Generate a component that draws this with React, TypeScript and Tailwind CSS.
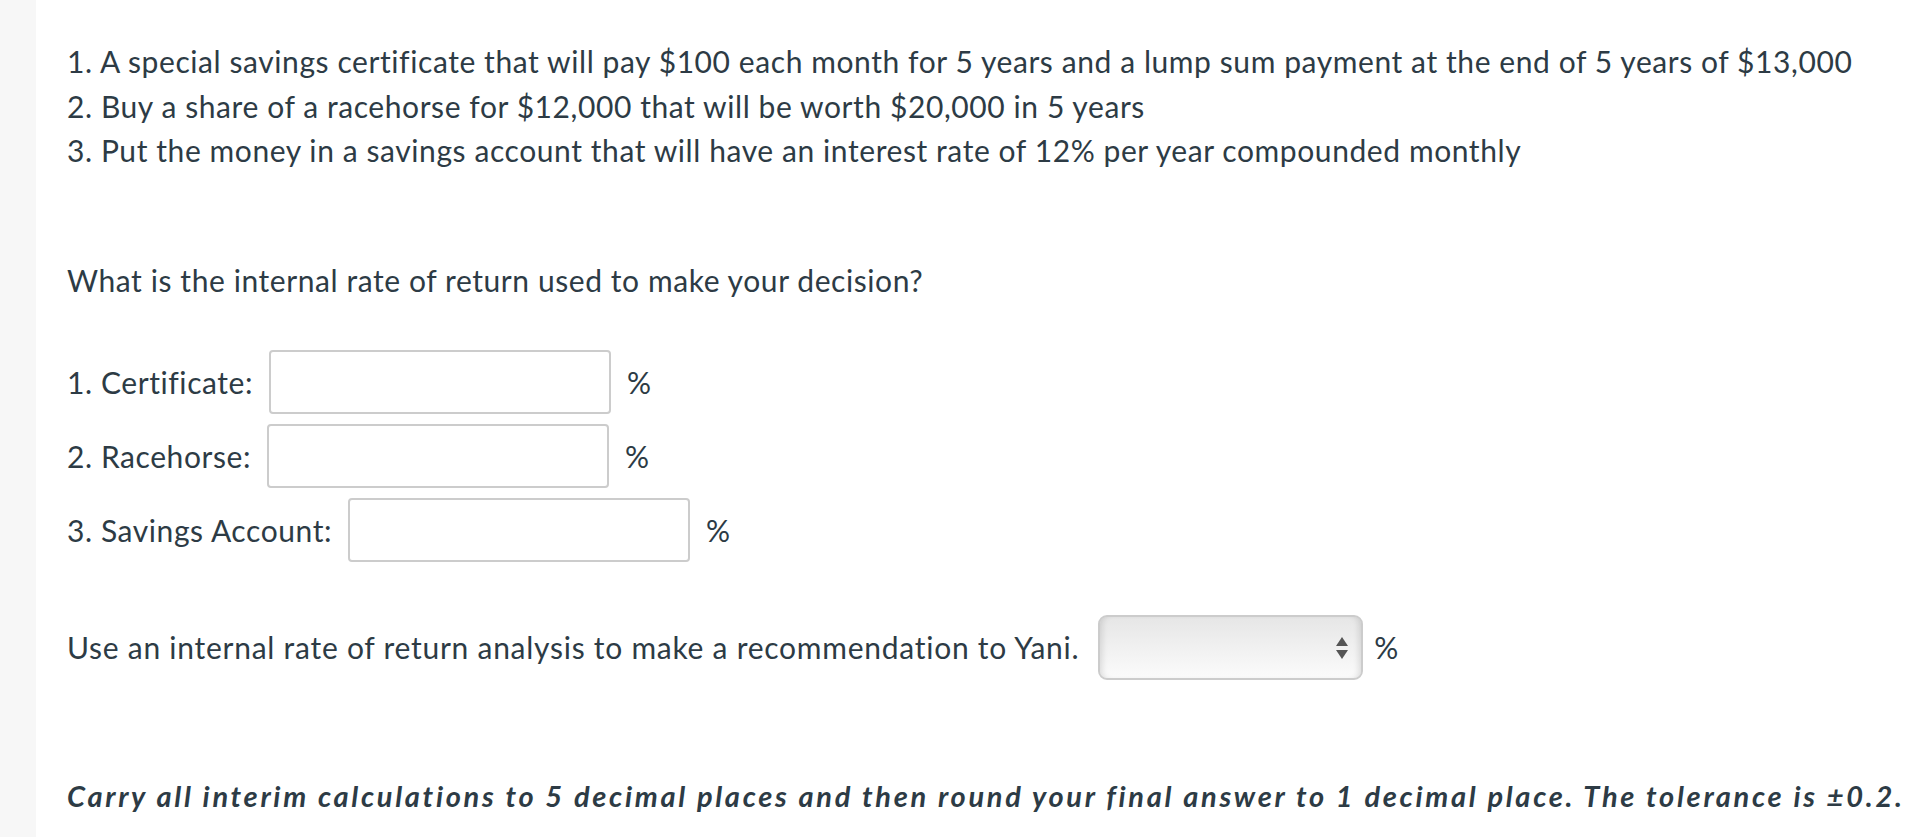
const items = [
  "1. A special savings certificate that will pay $100 each month for 5 years and a lump sum payment at the end of 5 years of $13,000",
  "2. Buy a share of a racehorse for $12,000 that will be worth $20,000 in 5 years",
  "3. Put the money in a savings account that will have an interest rate of 12% per year compounded monthly",
];

const rows = ["1. Certificate:", "2. Racehorse:", "3. Savings Account:"];

function Box() {
  return (
    <div className="w-[342px] h-[64px] shrink-0 border-2 border-[#cccccc] rounded-[4px] bg-white" />
  );
}

function Select() {
  return (
    <div className="relative w-[265px] h-[65px] shrink-0 border-2 border-[#cccccc] rounded-[9px] bg-gradient-to-b from-[#e6e6e6] to-[#fbfbfb] shadow-[inset_6px_0_6px_-4px_rgba(0,0,0,0.12),inset_-6px_0_6px_-4px_rgba(0,0,0,0.12)]">
      <svg
        className="absolute right-[13px] top-[20px]"
        width="12"
        height="22"
        viewBox="0 0 12 22"
      >
        <path d="M6 0 L12 9 L0 9 Z" fill="#555555" />
        <path d="M0 13 L12 13 L6 22 Z" fill="#555555" />
      </svg>
    </div>
  );
}

export default function App() {
  return (
    <div
      className="flex min-h-[837px] bg-white text-[#2d3b45] text-[30px] leading-[44.5px] tracking-[0.58px]"
      style={{ fontFamily: "Lato, 'Open Sans', sans-serif" }}
    >
      <div className="w-[36px] shrink-0 bg-[#f7f7f7]" />
      <div className="pl-[31px] pt-[39px]">
        {items.map((t) => (
          <p key={t} className="whitespace-nowrap">
            {t}
          </p>
        ))}
        <p className="mt-[85px]">What is the internal rate of return used to make your decision?</p>
        <div className="mt-[48px] flex flex-col gap-[10px]">
          {rows.map((r) => (
            <div key={r} className="flex items-center">
              <span className="mr-[16px]">{r}</span>
              <Box />
              <span className="ml-[16px]">%</span>
            </div>
          ))}
        </div>
        <div className="mt-[53px] flex items-center">
          <span className="mr-[19px] whitespace-nowrap tracking-[0.74px]">
            Use an internal rate of return analysis to make a recommendation to Yani.
          </span>
          <Select />
          <span className="ml-[11px]">%</span>
        </div>
        <p className="mt-[94px] whitespace-nowrap font-bold italic text-[29px] tracking-[2.7px]">
          Carry all interim calculations to 5 decimal places and then round your final answer to 1 decimal place. The tolerance is ±0.2.
        </p>
      </div>
    </div>
  );
}
